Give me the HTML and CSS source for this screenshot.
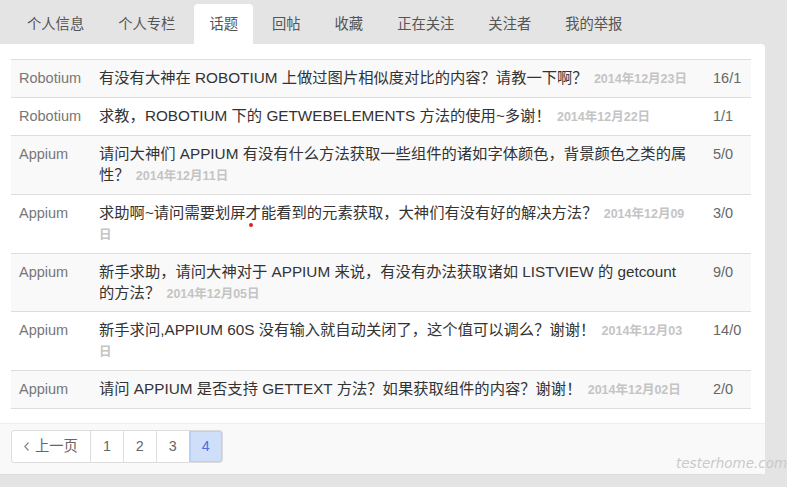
FILE: index.html
```html
<!DOCTYPE html>
<html>
<head>
    <meta charset="utf-8">
    <link rel="stylesheet" href="styles.css">
</head>
<body>
    <ul class="tabs">
        <li><a href="#info">个人信息</a></li>
        <li><a href="#column">个人专栏</a></li>
        <li class="active"><a href="#topics">话题</a></li>
        <li><a href="#replies">回帖</a></li>
        <li><a href="#favorites">收藏</a></li>
        <li><a href="#following">正在关注</a></li>
        <li><a href="#followers">关注者</a></li>
        <li><a href="#reports">我的举报</a></li>
    </ul>

    <div class="card">
        <div class="card-body">
            <table class="topics">
                <colgroup>
                    <col class="col-node">
                    <col class="col-title">
                    <col class="col-count">
                </colgroup>
                <tr>
                    <td class="node">Robotium</td>
                    <td class="title">有没有大神在 ROBOTIUM 上做过图片相似度对比的内容？请教一下啊？ <span class="date">2014年12月23日</span></td>
                    <td class="count">16/1</td>
                </tr>
                <tr>
                    <td class="node">Robotium</td>
                    <td class="title">求教，ROBOTIUM 下的 GETWEBELEMENTS 方法的使用~多谢！ <span class="date">2014年12月22日</span></td>
                    <td class="count">1/1</td>
                </tr>
                <tr>
                    <td class="node">Appium</td>
                    <td class="title">请问大神们 APPIUM 有没有什么方法获取一些组件的诸如字体颜色，背景颜色之类的属性？ <span class="date">2014年12月11日</span></td>
                    <td class="count">5/0</td>
                </tr>
                <tr>
                    <td class="node">Appium</td>
                    <td class="title">求助啊~请问需要划屏才能看到的元素获取，大神们有没有好的解决方法？ <span class="date">2014年12月09日</span></td>
                    <td class="count">3/0</td>
                </tr>
                <tr>
                    <td class="node">Appium</td>
                    <td class="title">新手求助，请问大神对于 APPIUM 来说，有没有办法获取诸如 LISTVIEW 的 getcount 的方法？ <span class="date">2014年12月05日</span></td>
                    <td class="count">9/0</td>
                </tr>
                <tr>
                    <td class="node">Appium</td>
                    <td class="title">新手求问,APPIUM 60S 没有输入就自动关闭了，这个值可以调么？谢谢！ <span class="date">2014年12月03日</span></td>
                    <td class="count">14/0</td>
                </tr>
                <tr>
                    <td class="node">Appium</td>
                    <td class="title">请问 APPIUM 是否支持 GETTEXT 方法？如果获取组件的内容？谢谢！ <span class="date">2014年12月02日</span></td>
                    <td class="count">2/0</td>
                </tr>
            </table>
        </div>

        <div class="card-footer">
            <ul class="pagination">
                <li><a href="#prev"><svg class="chevron" width="5" height="9" viewBox="0 0 5 9"><polyline points="4.5,0.5 0.8,4.5 4.5,8.5" fill="none" stroke="#888" stroke-width="1.2"/></svg>上一页</a></li>
                <li><a href="#p1">1</a></li>
                <li><a href="#p2">2</a></li>
                <li><a href="#p3">3</a></li>
                <li class="active"><a href="#p4">4</a></li>
            </ul>
        </div>
    </div>

    <!-- watermark and the stray red dot sit over the content -->
    <span class="watermark">testerhome.com</span>
    <span class="dot"></span>
</body>
</html>
```

FILE: styles.css
```css
body {
    margin: 0;
    background-color: #e4e4e4;
    font-family: "Liberation Sans", "Noto Sans CJK SC", sans-serif;
    color: #333;
    position: relative;
    height: 487px;
    overflow: hidden;
}

a {
    text-decoration: none;
    color: inherit;
}

.tabs {
    list-style-type: none;
    margin: 0;
    padding: 4px 0 0 12px;
    display: flex;
    height: 40px;
}

.tabs li {
    margin-right: 4px;
}

.tabs li a {
    display: block;
    padding: 0 15px;
    line-height: 40px;
    font-size: 14.3px;
    color: #555;
    border-radius: 4px 4px 0 0;
}

.tabs li.active a {
    background-color: #fff;
}

.card {
    width: 765px;
    background-color: #fff;
    border-radius: 0 4px 4px 0;
    overflow: hidden;
}

.card-body {
    padding: 15px 14px 14px 11px;
}

.topics {
    width: 740px;
    table-layout: fixed;
    border-collapse: collapse;
    border-bottom: 1px solid #ddd;
}

.col-node {
    width: 80px;
}

.col-title {
    width: 614px;
}

.topics td {
    border-top: 1px solid #ddd;
    padding: 8px;
    vertical-align: top;
}

.topics tr:nth-child(odd) td {
    background-color: #f9f9f9;
}

.node,
.count {
    font-size: 14.5px;
    line-height: 21px;
    color: #777;
}

.count {
    color: #666;
}

/* the CJK fallback font is taller than Liberation Sans, so the line-height
   is trimmed to keep each line box at about 21px */
.topics td.title {
    font-size: 15.3px;
    line-height: 20.9px;
    color: #333;
    padding-right: 12px;
}

.date {
    font-size: 12.5px;
    font-weight: bold;
    color: #c4c4c4;
    margin-left: 2px;
    line-height: 14px;
}

.card-footer {
    background-color: #f9f9f9;
    border-top: 1px solid #eee;
    border-bottom: 1px solid #ddd;
    padding: 6px 11px 11px;
}

.pagination {
    list-style-type: none;
    margin: 0;
    padding: 0;
    display: inline-flex;
    border: 1px solid #ddd;
    border-radius: 3px;
    background-color: #fff;
}

.pagination li a {
    display: flex;
    align-items: center;
    height: 21px;
    padding: 5px 12px;
    line-height: 19px;
    font-size: 14.3px;
    color: #666;
}

.pagination li + li a {
    border-left: 1px solid #ddd;
}

.chevron {
    margin-right: 6px;
}

.pagination li.active a {
    background-color: #cfdef9;
    color: #4b6fdc;
    box-shadow: inset 0 0 0 1px #b9cff3;
    border-left-color: #b9cff3;
    border-radius: 0 3px 3px 0;
}

.watermark {
    position: absolute;
    left: 676px;
    top: 455px;
    font-family: "DejaVu Sans", sans-serif;
    font-size: 13.5px;
    font-style: italic;
    font-weight: 200;
    color: #c9c9c9;
}

.dot {
    position: absolute;
    left: 249px;
    top: 223px;
    width: 4px;
    height: 4px;
    border-radius: 50%;
    background-color: #e02020;
}
```
